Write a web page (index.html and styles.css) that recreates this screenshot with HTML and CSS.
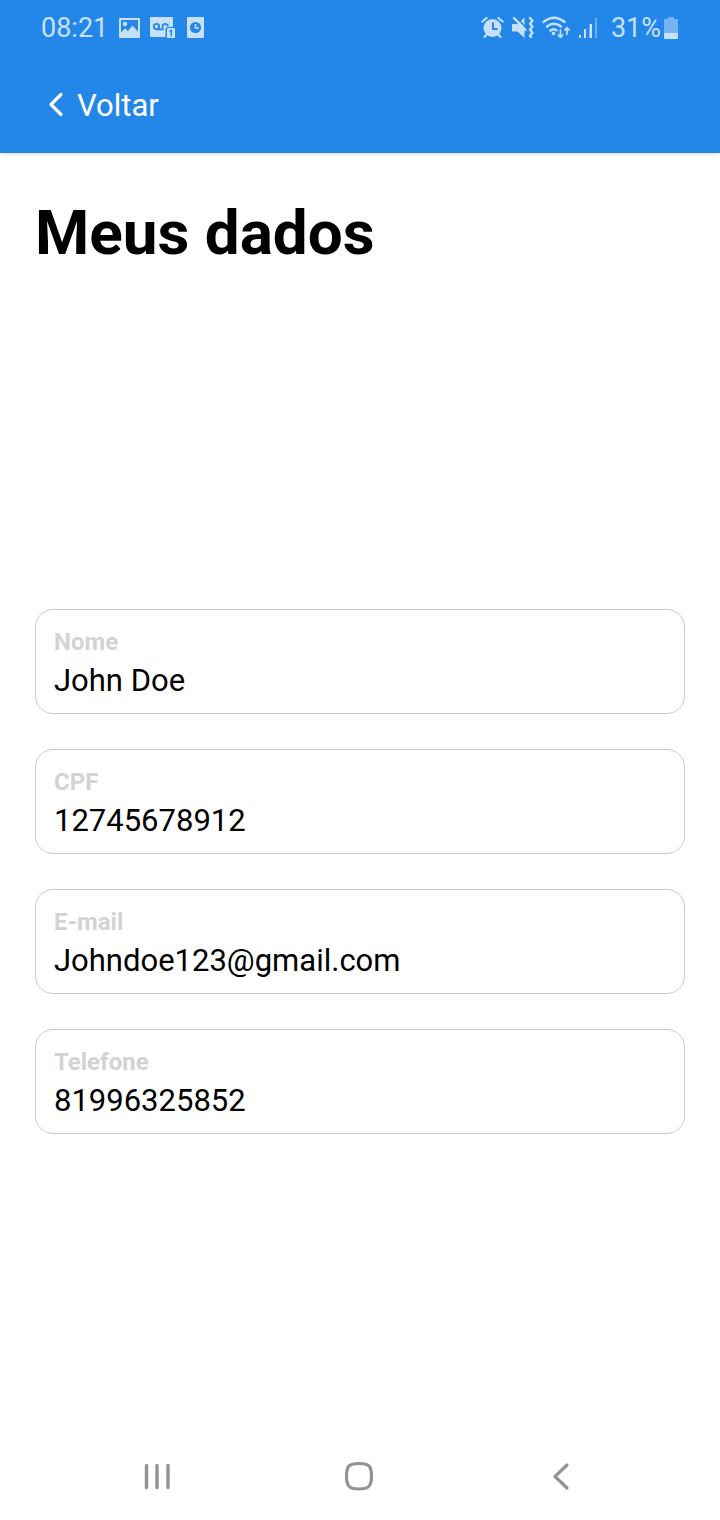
FILE: index.html
```html
<!DOCTYPE html>
<html lang="pt-BR">
<head>
<meta charset="utf-8">
<meta name="viewport" content="width=device-width, initial-scale=1">
<title>Meus dados</title>
<link rel="stylesheet" href="styles.css">
</head>
<body>
<div class="screen">
  <header class="top">
    <div class="status">
      <div class="status-group status-left">
        <span class="status-text">08:21</span>
        <svg width="22" height="28" viewBox="118 14 22 28" aria-hidden="true">
          <path fill="currentColor" fill-rule="evenodd" d="M120 18h19q1 0 1 1v18q0 1-1 1h-19q-1 0-1-1v-18q0-1 1-1zM121 20v12.500l4-4 3 2.500 4.500-5.500 5.500 6v-11.500z"/>
          <circle cx="125" cy="24" r="2.200" fill="currentColor"/>
        </svg>
        <svg width="26" height="28" viewBox="150 14 26 28" aria-hidden="true">
          <path fill="currentColor" d="M151 17h21q1 0 1 1v9h-6v10h-16q-1 0-1-1v-18q0-1 1-1z"/>
          <g fill="none" stroke="#2386e9" stroke-width="1.800"><circle cx="156.500" cy="26.500" r="2.700"/><path d="M156.500 29.300h7M162.500 29v-2.500a2.700 2.700 0 0 1 5.400 0"/></g>
          <path fill="#2386e9" d="M165.500 28h2v10h-2z"/>
          <path fill="currentColor" d="M168 28h6q1 0 1 1v9h-8v-9q0-1 1-1z"/>
          <path fill="none" stroke="#2386e9" stroke-width="1.500" d="M169.500 31.500l1.800-1v6"/>
        </svg>
        <svg width="18" height="28" viewBox="186 14 18 28" aria-hidden="true">
          <rect x="187" y="17" width="17" height="21" rx="1" fill="currentColor"/>
          <circle cx="195.500" cy="27.500" r="5.600" fill="#2386e9"/>
          <path fill="none" stroke="currentColor" stroke-width="1.600" d="M195.500 24v4h3.500"/>
        </svg>
      </div>
      <div class="status-group status-right">
        <svg width="24" height="28" viewBox="480 14 24 28" aria-hidden="true">
          <circle cx="492.500" cy="28" r="9" fill="currentColor"/>
          <g fill="none" stroke="currentColor" stroke-width="2.200" stroke-linecap="round"><path d="M482.500 21.500l4-3.500M502.500 21.500l-4-3.500M487 34l-2.500 3M498 34l2.500 3"/></g>
          <path fill="none" stroke="#2386e9" stroke-width="2" d="M493 22.500v6.500h4.500"/>
        </svg>
        <svg width="24" height="28" viewBox="511 14 24 28" aria-hidden="true">
          <path fill="currentColor" d="M512 24h5.500l7-6.500v20.500l-7-6.500h-5.500z"/>
          <path stroke="#2386e9" stroke-width="1.500" d="M516 17l10 10.500"/>
          <path stroke="currentColor" stroke-width="2.400" stroke-linecap="round" d="M514 18l11.500 12"/>
          <path fill="none" stroke="currentColor" stroke-width="2.400" stroke-linecap="round" stroke-linejoin="round" d="M530 18l2.500 2.700-2.500 3 2.500 3-2.500 3 2.500 3-2.500 3 1 1.300"/>
        </svg>
        <svg width="29" height="28" viewBox="542 14 29 28" aria-hidden="true">
          <g fill="none" stroke="currentColor" stroke-width="2.400" stroke-linecap="round"><path d="M543.500 22q10.500-8.500 21 0M547 26.500q7-5.500 14 0M550.500 30.500q3.500-2.500 6 0"/></g>
          <circle cx="553.500" cy="33.500" r="1.800" fill="currentColor"/>
          <path fill="none" stroke="currentColor" stroke-width="1.700" d="M560.500 29.500v7.500M557.800 34.500l2.700 2.700 2.700-2.700M567 35v-7M564.300 30.500l2.700-2.700 2.700 2.700"/>
        </svg>
        <svg width="21" height="28" viewBox="577 14 21 28" aria-hidden="true">
          <path fill="currentColor" d="M578 35h2v3h-2zM583 29h2v9h-2zM588.500 24h2.500v14h-2.500z"/>
          <path fill="currentColor" opacity=".45" d="M594 18h2v20h-2z"/>
        </svg>
        <span class="status-text percent">31%</span>
        <svg class="battery" width="16" height="28" viewBox="663 14 16 28" aria-hidden="true">
          <path fill="currentColor" opacity=".5" d="M668 17h6v2h3q1 0 1 1v13h-14v-13q0-1 1-1h3z"/>
          <path fill="currentColor" d="M664 33h14v5q0 1-1 1h-12q-1 0-1-1z"/>
        </svg>
      </div>
    </div>
    <nav class="appbar">
      <button class="back" type="button">
        <svg width="18" height="28" viewBox="0 0 18 28" aria-hidden="true"><path fill="none" stroke="currentColor" stroke-width="3.200" stroke-linecap="round" stroke-linejoin="round" d="M14 2.500L4 12.500l10 10"/></svg>
        <span>Voltar</span>
      </button>
    </nav>
  </header>
  <main class="content">
    <h1 class="title">Meus dados</h1>
    <form class="fields">
      <div class="field">
        <label class="label" for="nome">Nome</label>
        <input class="value" id="nome" type="text" value="John Doe">
      </div>
      <div class="field">
        <label class="label" for="cpf">CPF</label>
        <input class="value" id="cpf" type="text" value="12745678912">
      </div>
      <div class="field">
        <label class="label" for="email">E-mail</label>
        <input class="value" id="email" type="email" value="Johndoe123@gmail.com">
      </div>
      <div class="field">
        <label class="label" for="telefone">Telefone</label>
        <input class="value" id="telefone" type="tel" value="81996325852">
      </div>
    </form>
  </main>
  <footer class="navbar">
    <button class="nav-button" type="button" aria-label="Recentes">
      <svg width="32" height="32" viewBox="0 0 32 32" aria-hidden="true"><path fill="none" stroke="currentColor" stroke-width="3.400" stroke-linecap="round" d="M5.500 5.500v22M16 5.500v22M27 5.500v22"/></svg>
    </button>
    <button class="nav-button" type="button" aria-label="Início">
      <svg width="32" height="32" viewBox="0 0 32 32" aria-hidden="true"><path fill="none" stroke="currentColor" stroke-width="3.200" d="M16 3.500c10 0 12.500 2.500 12.500 12.500S26 29 16 29 3.500 26 3.500 16 6 3.500 16 3.500z"/></svg>
    </button>
    <button class="nav-button" type="button" aria-label="Voltar">
      <svg width="32" height="32" viewBox="0 0 32 32" aria-hidden="true"><path fill="none" stroke="currentColor" stroke-width="3.200" stroke-linecap="round" stroke-linejoin="round" d="M22 5L10 16.500l12 11.500"/></svg>
    </button>
  </footer>
</div>
</body>
</html>
```
FILE: styles.css
```css
* {
  box-sizing: border-box;
}

body {
  margin: 0;
  background: #fff;
  color: #000;
  font-family: Roboto, "Liberation Sans", sans-serif;
}

svg {
  display: block;
  flex: none;
}

button {
  padding: 0;
  border: 0;
  background: none;
  font: inherit;
  cursor: pointer;
}

.screen {
  display: flex;
  flex-direction: column;
  min-height: 100vh;
}

.top {
  background: #2386e9;
  box-shadow: 0 1px 4px rgba(0, 0, 0, 0.16);
}

.status {
  display: flex;
  justify-content: space-between;
  align-items: center;
  height: 56px;
  padding: 0 41px;
  color: #c8e1fa;
}

.status-group {
  display: flex;
  align-items: center;
}

.status-left {
  gap: 10px;
}

.status-right {
  gap: 7px;
}

.status-text {
  font-size: 27px;
  line-height: 32px;
}

.percent {
  margin-left: 5px;
}

.battery {
  margin-left: -5px;
}

.appbar {
  display: flex;
  align-items: center;
  height: 97px;
  padding: 2px 47px 0;
}

.back {
  display: flex;
  align-items: center;
  gap: 12px;
  color: #fff;
  font-size: 31px;
  line-height: 36px;
}

.content {
  display: flex;
  flex: 1;
  flex-direction: column;
  padding: 42px 35px;
}

.title {
  margin: 0;
  font-size: 62px;
  font-weight: 700;
  line-height: 76px;
}

.fields {
  display: flex;
  flex-direction: column;
  gap: 35px;
  margin-top: 338px;
}

.field {
  display: flex;
  flex-direction: column;
  height: 105px;
  padding: 17px 18px 12px;
  border: 1px solid #c8c8c8;
  border-radius: 18px;
}

.label {
  color: #d3d3d3;
  font-size: 24px;
  font-weight: 700;
  line-height: 30px;
}

.value {
  width: 100%;
  height: 44px;
  margin-top: 2px;
  padding: 0;
  border: 0;
  outline: 0;
  background: none;
  color: #000;
  font-family: inherit;
  font-size: 31px;
}

.navbar {
  display: flex;
  justify-content: center;
  gap: 170px;
  padding: 28px 3px 28px 0;
}

.nav-button {
  color: #939393;
}
```
